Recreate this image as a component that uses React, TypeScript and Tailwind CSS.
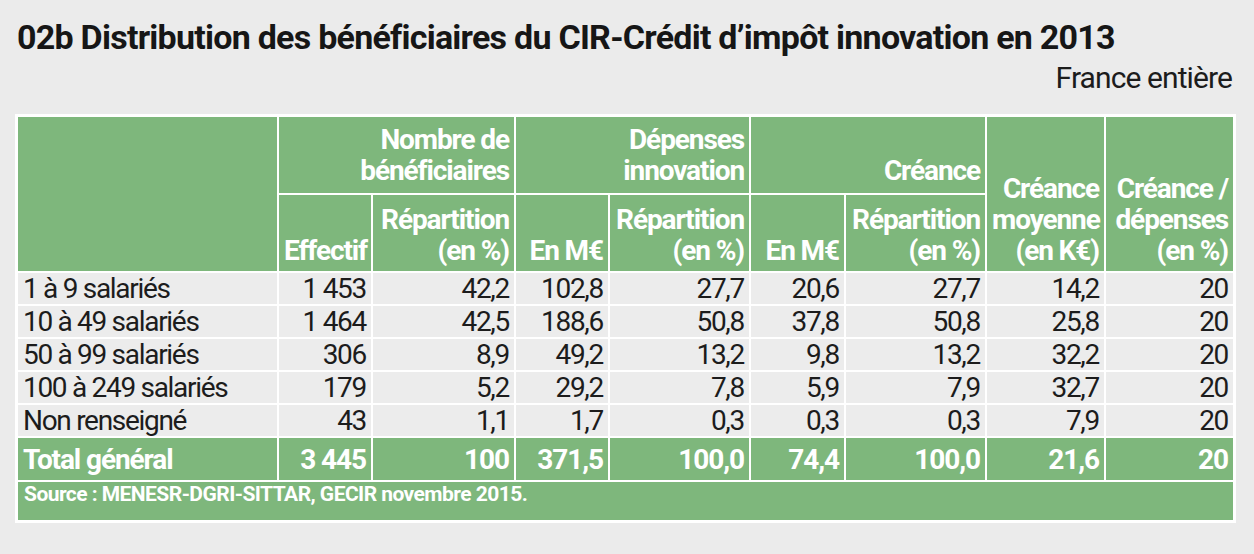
import React from "react";

const rows = [
  ["1 à 9 salariés", "1 453", "42,2", "102,8", "27,7", "20,6", "27,7", "14,2", "20"],
  ["10 à 49 salariés", "1 464", "42,5", "188,6", "50,8", "37,8", "50,8", "25,8", "20"],
  ["50 à 99 salariés", "306", "8,9", "49,2", "13,2", "9,8", "13,2", "32,2", "20"],
  ["100 à 249 salariés", "179", "5,2", "29,2", "7,8", "5,9", "7,9", "32,7", "20"],
  ["Non renseigné", "43", "1,1", "1,7", "0,3", "0,3", "0,3", "7,9", "20"],
];

const total = ["Total général", "3 445", "100", "371,5", "100,0", "74,4", "100,0", "21,6", "20"];

const widths = [259, 92, 141, 92, 139, 93, 139, 117, 127];

const head =
  "bg-[#7eb77c] text-white font-bold text-right align-bottom px-[5px] pb-[5px] leading-[31px] tracking-[-1.1px] whitespace-nowrap";

const App = () => {
  return (
    <div className="min-h-[554px] w-[1254px] bg-[#ebebeb] font-['Roboto','Liberation_Sans',sans-serif] text-[#1c1c1c]">
      {/* Title */}
      <div className="pt-[20px] pl-[17px] pr-[22px]">
        <h1 className="text-[34px] leading-[35px] font-bold tracking-[-0.75px] text-[#161616] whitespace-nowrap">
          02b Distribution des bénéficiaires du CIR-Crédit d’impôt innovation en 2013
        </h1>
        <p className="mt-[7px] text-right text-[30px] leading-[31px] tracking-[-0.9px]">France entière</p>
      </div>

      {/* Table */}
      <div className="mt-[21px] ml-[15px] inline-block bg-white p-px">
        <table className="w-[1219px] table-fixed border-separate border-spacing-[2px] text-[28px]">
          <colgroup>
            {widths.map((w, i) => (
              <col key={i} style={{ width: w }} />
            ))}
          </colgroup>
          <thead>
            <tr className="h-[76px]">
              <th rowSpan={2} className="bg-[#7eb77c]" />
              <th colSpan={2} className={head + " pb-[7px]"}>
                Nombre de
                <br />
                bénéficiaires
              </th>
              <th colSpan={2} className={head + " pb-[7px]"}>
                Dépenses
                <br />
                innovation
              </th>
              <th colSpan={2} className={head + " pb-[7px]"}>
                Créance
              </th>
              <th rowSpan={2} className={head}>
                Créance
                <br />
                moyenne
                <br />
                (en K€)
              </th>
              <th rowSpan={2} className={head}>
                Créance /
                <br />
                dépenses
                <br />
                (en %)
              </th>
            </tr>
            <tr className="h-[76px]">
              <th className={head}>Effectif</th>
              <th className={head}>
                Répartition
                <br />
                (en %)
              </th>
              <th className={head}>En M€</th>
              <th className={head}>
                Répartition
                <br />
                (en %)
              </th>
              <th className={head}>En M€</th>
              <th className={head}>
                Répartition
                <br />
                (en %)
              </th>
            </tr>
          </thead>
          <tbody>
            {rows.map((r) => (
              <tr key={r[0]} className="h-[31px]">
                {r.map((c, i) => (
                  <td
                    key={i}
                    className={
                      "bg-[#ececec] px-[5px] py-0 leading-[31px] tracking-[-1.3px] whitespace-nowrap " +
                      (i === 0 ? "text-left" : "text-right")
                    }
                  >
                    {c}
                  </td>
                ))}
              </tr>
            ))}
            <tr className="h-[42px]">
              {total.map((c, i) => (
                <td
                  key={i}
                  className={
                    "bg-[#7eb77c] text-white font-bold px-[5px] leading-[31px] tracking-[-1.1px] whitespace-nowrap " +
                    (i === 0 ? "text-left" : "text-right")
                  }
                >
                  {c}
                </td>
              ))}
            </tr>
            <tr>
              <td
                colSpan={9}
                className="h-[38px] bg-[#7eb77c] text-white font-bold text-[21px] leading-[24px] tracking-[-0.55px] align-top px-[6px]"
              >
                Source : MENESR-DGRI-SITTAR, GECIR novembre 2015.
              </td>
            </tr>
          </tbody>
        </table>
      </div>
    </div>
  );
};

export default App;
